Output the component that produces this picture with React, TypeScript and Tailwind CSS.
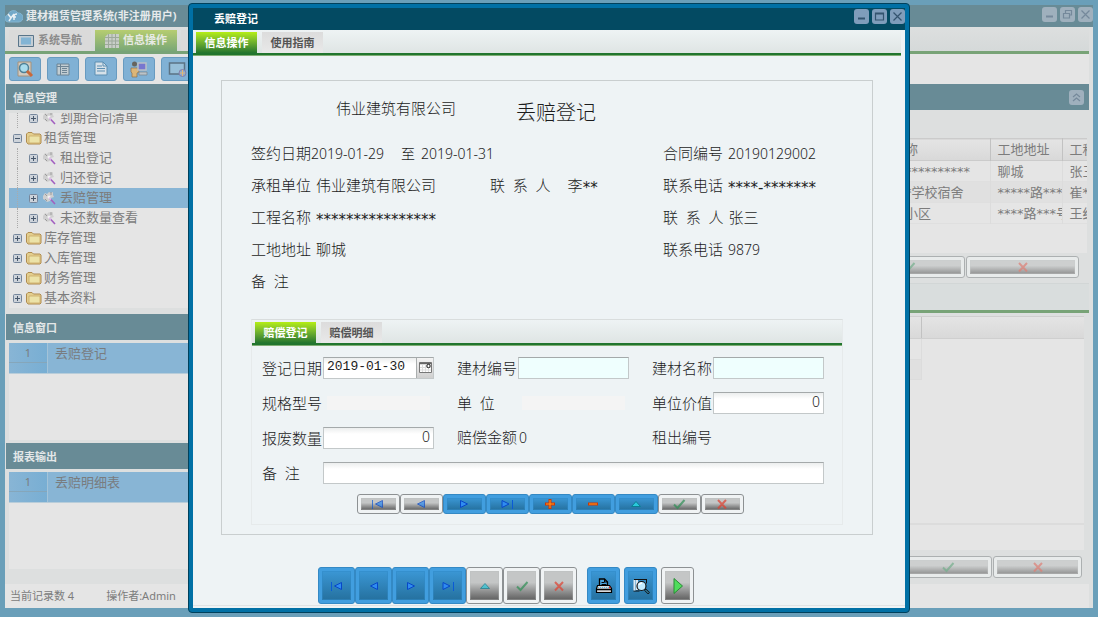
import { useState, type ReactNode } from "react";
import clsx from "clsx";

const UI_FONT = "font-['Noto_Sans','Noto_Sans_CJK_SC',sans-serif]";

const treeItems = [
    { label: "到期合同清单", level: 1 },
    { label: "租赁管理", level: 0, open: true },
    { label: "租出登记", level: 1 },
    { label: "归还登记", level: 1 },
    { label: "丢赔管理", level: 1, active: true },
    { label: "未还数量查看", level: 1 },
    { label: "库存管理", level: 0 },
    { label: "入库管理", level: 0 },
    { label: "财务管理", level: 0 },
    { label: "基本资料", level: 0 }
];

const projects = [
    { name: "****************", address: "聊城", contact: "张三" },
    { name: "*******学校宿舍", address: "*****路****", contact: "崔**" },
    { name: "******小区", address: "****路***号", contact: "王经理" }
];

type GlyphName = "first" | "prev" | "next" | "last" | "plus" | "minus" | "up" | "check" | "cross" | "play";

function Glyph({ name }: { name: GlyphName }) {
    const blue = { fill: "#2f8cf0", stroke: "#0747c8", strokeWidth: 1 };
    return (
        <svg viewBox="0 0 16 12" className="w-4 h-3 overflow-visible" aria-hidden="true">
            {name === "first" && (
                <>
                    <path d="M12.5 2.5v7L5.5 6z" {...blue} />
                    <path d="M2.5 2v9" stroke="#0a5ad6" />
                </>
            )}
            {name === "prev" && <path d="M11.5 2.5v7L4.5 6z" {...blue} />}
            {name === "next" && <path d="M4.5 2.5v7L11.500 6z" {...blue} />}
            {name === "last" && (
                <>
                    <path d="M3 2.5v7L10 6z" {...blue} />
                    <path d="M13.5 2v9" stroke="#0a5ad6" />
                </>
            )}
            {name === "plus" && (
                <>
                    <path d="M8 1v10M3 6h10" stroke="#d23600" strokeWidth="3" />
                    <path d="M8 2v8M4 6h8" stroke="#ff9a20" strokeWidth="1" />
                </>
            )}
            {name === "minus" && (
                <>
                    <path d="M3 6h10" stroke="#d23600" strokeWidth="3" />
                    <path d="M4 6h8" stroke="#ff9a20" strokeWidth="1" />
                </>
            )}
            {name === "up" && <path d="M8 3.5L3.5 8.5h9z" fill="#29c9dc" stroke="#0b7f93" strokeWidth="1" />}
            {name === "check" && <path d="M3 6.5L6.5 10 13.5 2" fill="none" stroke="#2f8f55" strokeWidth="2" />}
            {name === "cross" && <path d="M4 2l8 8.5M12 2L4 10.5" fill="none" stroke="#e0402f" strokeWidth="2" />}
            {name === "play" && <path d="M4-1.5v15L12.500 6z" fill="#4fdc5c" stroke="#2a8a36" />}
        </svg>
    );
}

// Blue when active, silver when the record action is unavailable
function ToolButton({
    label,
    off,
    className,
    faded,
    children
}: {
    label: string;
    off?: boolean;
    className: string;
    faded?: boolean;
    children: ReactNode;
}) {
    return (
        <button
            type="button"
            aria-label={label}
            title={label}
            className={clsx(
                "rounded-[3px] border p-[3px] flex",
                off ? "border-[#8d9193] bg-[#f0f3f4]" : "border-[#3489c4] bg-[#419edf]",
                className
            )}
        >
            <span
                className={clsx(
                    "flex-1 self-stretch flex items-center justify-center overflow-hidden",
                    off
                        ? "bg-linear-to-b from-[#c4c6c6] from-40% to-[#606060] shadow-[inset_0_0_0_1px_#b9bcbc55]"
                        : "bg-linear-to-b from-[#3b97d5] to-[#25719f] shadow-[inset_0_0_0_1px_#3089c880]"
                )}
            >
                <span className={faded ? "opacity-70" : ""}>{children}</span>
            </span>
        </button>
    );
}

function WindowButton({ label, children, className }: { label: string; children: ReactNode; className: string }) {
    return (
        <button
            type="button"
            aria-label={label}
            className={clsx("size-[15px] rounded-[3px] flex items-center justify-center", className)}
        >
            <svg viewBox="0 0 15 15" className="size-[15px]" fill="none" stroke="currentColor" strokeWidth="1.2">
                {children}
            </svg>
        </button>
    );
}

function TabStrip({ tabs, className }: { tabs: string[]; className?: string }) {
    const [current, setCurrent] = useState(tabs[0]);
    return (
        <div
            role="tablist"
            className={clsx(
                "h-[25px] mb-px flex items-end gap-[5px] pl-[3px] border-b-2 border-[#21752e] shadow-[0_1px_0_#7fae74] bg-linear-to-b from-[#eef3f4] to-[#dfe5e4]",
                className
            )}
        >
            {tabs.map((tab) => (
                <button
                    key={tab}
                    type="button"
                    role="tab"
                    aria-selected={tab === current}
                    onClick={() => setCurrent(tab)}
                    className={clsx(
                        "w-[61px] h-[21px] text-[11px] font-bold leading-[21px]",
                        tab === current
                            ? "bg-linear-to-b from-[#b5ee12] to-[#21752e] text-white"
                            : "bg-linear-to-b from-[#dcdcdc] to-[#e9e9e9] text-[#555]"
                    )}
                >
                    {tab}
                </button>
            ))}
        </div>
    );
}

function Stars({ children }: { children: string }) {
    return <span className="font-['DejaVu_Sans','Noto_Sans_CJK_SC',sans-serif]">{children}</span>;
}

function Expander({ open }: { open?: boolean }) {
    return (
        <svg viewBox="0 0 9 9" className="size-[9px] shrink-0" aria-hidden="true">
            <rect x=".5" y=".5" width="8" height="8" rx="1" fill="#cdd3da" stroke="#76879c" />
            <path d={open ? "M2 4.5h5" : "M2 4.5h5M4.5 2v5"} stroke="#47576b" />
        </svg>
    );
}

function Folder() {
    return (
        <svg viewBox="0 0 16 14" className="w-4 h-3.5 shrink-0" aria-hidden="true">
            <path d="M.5 11V3L2 1.500h4L7.500 3H14l1 1v8l-1 1H2z" fill="#e3cf8f" stroke="#b08c50" />
            <path d="M3 5h11v7H3z" fill="#ece3a8" stroke="#cba968" strokeWidth=".8" />
        </svg>
    );
}

function Wand() {
    return (
        <svg viewBox="0 0 14 14" className="size-3.5 shrink-0" aria-hidden="true">
            <path d="M1 5l2-3 2 1 2-2 2 1 2-1v3l1 2-3 1-1 3-3 1-2-2-2-1z" fill="#cfcfcf" />
            <path d="M3 3l2 2M9 1v3M3 8l2 2" stroke="#9b9b9b" />
            <circle cx="7" cy="6" r="1.500" fill="#f2f2f2" />
            <path d="M7.500 7l5.500 6" stroke="#a25fc0" strokeWidth="1.600" />
            <path d="M7 6.500l2 2" stroke="#e7cdf0" strokeWidth="1.200" />
        </svg>
    );
}

function SectionTitle({ children }: { children: ReactNode }) {
    return (
        <h2 className="h-[26px] bg-[#688b96] pl-[7px] text-[11px] leading-[27px] font-bold text-[#e3e7e8]">
            {children}
        </h2>
    );
}

function SideList({ item }: { item: string }) {
    return (
        <div className="mt-[3px] ml-[3px] h-[97px] bg-[#e5e5e5]">
            <div className="flex h-[31px] border-b border-[#b8cdda] bg-[#88b5d5] text-[13px] leading-5 text-[#797c7f]">
                <div className="w-[39px] border-r border-[#a3c3d8] bg-linear-to-r from-[#88b5d5] to-[#78aed3]">
                    <div className="h-5 border-b border-[#85a6ba] text-center text-[11px]">1</div>
                </div>
                <div className="pl-[7px]">{item}</div>
            </div>
        </div>
    );
}

function Sidebar() {
    return (
        <aside className="w-[200px] shrink-0 flex flex-col pl-[1px]">
            <SectionTitle>信息管理</SectionTitle>
            <div className="mt-[3px] ml-[3px] h-[195px] overflow-hidden bg-[#e5e5e5]">
                <ul className="-mt-[5px] text-[13px] text-[#7c7c7c]">
                    {treeItems.map((item) => (
                        <li
                            key={item.label}
                            className={clsx("flex h-5 items-center", item.active && "bg-[#88b5d5]")}
                        >
                            {item.level === 0 ? (
                                <>
                                    <span className="w-1" />
                                    <Expander open={item.open} />
                                    <span className="w-1" />
                                    <Folder />
                                    <span className="pl-[2px]">{item.label}</span>
                                </>
                            ) : (
                                <>
                                    <span className="ml-2 w-3 self-stretch border-l border-dotted border-[#aaa]" />
                                    <Expander />
                                    <span className="w-1" />
                                    <Wand />
                                    <span className="pl-[4px]">{item.label}</span>
                                </>
                            )}
                        </li>
                    ))}
                </ul>
            </div>
            <div className="mt-[6px]">
                <SectionTitle>信息窗口</SectionTitle>
                <SideList item="丢赔登记" />
            </div>
            <div className="mt-[3px]">
                <SectionTitle>报表输出</SectionTitle>
                <SideList item="丢赔明细表" />
            </div>
        </aside>
    );
}

function DimButtons({ className, width }: { className: string; width: string }) {
    return (
        <div className={clsx("flex justify-end gap-px opacity-60", className)}>
            <ToolButton label="保存" off className={clsx("h-[22px]", width)} faded>
                <Glyph name="check" />
            </ToolButton>
            <ToolButton label="取消" off className={clsx("h-[22px]", width)} faded>
                <Glyph name="cross" />
            </ToolButton>
        </div>
    );
}

function MainPanel() {
    return (
        <main className="flex-1 min-w-0 flex flex-col">
            <div className="h-[26px] shrink-0 flex items-center justify-end bg-[#688b96] pr-[5px]">
                <WindowButton label="折叠" className="bg-[#9fb0bd] text-[#75899b]">
                    <path d="M4 7l3.500-3L11 7M4 11l3.500-3 3.500 3" />
                </WindowButton>
            </div>
            <div className="mt-7 mr-[2px] h-[115px] overflow-hidden bg-[#e5e5e5]">
                <table className="w-full table-fixed text-left text-[13px] text-[#7c7c7c]">
                    <colgroup>
                        <col className="w-[653px]" />
                        <col className="w-[132px]" />
                        <col className="w-[72px]" />
                        <col />
                    </colgroup>
                    <thead>
                        <tr className="h-[22px] border-y border-[#cbcbcb] bg-linear-to-b from-[#e4e4e4] to-[#d9d9d9]">
                            <th />
                            <th className="font-normal pl-2 border-r border-[#c2c2c2]">工程名称</th>
                            <th className="font-normal pl-[7px] border-r border-[#c2c2c2]">工地地址</th>
                            <th className="font-normal pl-[7px] whitespace-nowrap overflow-hidden">工程联系</th>
                        </tr>
                    </thead>
                    <tbody>
                        {projects.map((p) => (
                            <tr
                                key={p.name}
                                className="h-[21px] leading-4 whitespace-nowrap border-b border-[#dfdfdf] even:bg-[#e0e0e0]"
                            >
                                <td />
                                <td className="pl-2 overflow-hidden border-r border-[#dcdcdc]">
                                    <Stars>{p.name}</Stars>
                                </td>
                                <td className="pl-[7px] overflow-hidden border-r border-[#dcdcdc]">
                                    <Stars>{p.address}</Stars>
                                </td>
                                <td className="pl-[7px] overflow-hidden">
                                    <Stars>{p.contact}</Stars>
                                </td>
                            </tr>
                        ))}
                    </tbody>
                </table>
            </div>
            <DimButtons className="mt-[3px] pr-[10px]" width="w-[113px]" />
            <div className="mt-[5px] h-[30px] shrink-0 border-t border-[#d2d6d6] border-b-[3px] border-b-[#78a377] bg-[#d9dddd]" />
            <div className="mt-[3px] mr-[5px] flex-1 flex flex-col bg-[#e5e5e5]">
                <div className="flex h-[23px] border-y border-[#cfcfcf] bg-linear-to-b from-[#e4e4e4] to-[#d9d9d9]">
                    <div className="w-[717px] border-r border-[#c2c2c2]" />
                </div>
                <div className="h-5 w-[717px] border-r border-[#dcdcdc]" />
                <div className="h-[21px] w-[717px] border border-[#dcdcdc] bg-[#e0e0e0]" />
                <div className="flex-1" />
                <div className="h-[27px] border-t-2 border-[#dcdcdc]" />
            </div>
            <DimButtons className="mt-[6px] mb-[6px] pr-[7px]" width="w-[89px]" />
        </main>
    );
}

function ShellTool({ label, children }: { label: string; children: ReactNode }) {
    return (
        <button
            type="button"
            aria-label={label}
            className="h-6 w-8 rounded-[3px] border border-[#689bc0] bg-[#80b1d5] flex items-center justify-center"
        >
            <svg viewBox="0 0 20 18" className="w-5 h-[18px]" aria-hidden="true">
                {children}
            </svg>
        </button>
    );
}

function Shell() {
    return (
        <div className="h-full flex flex-col border-x-[5px] border-t-[5px] border-b-[9px] border-[#6a9fb9] bg-[#dddfdf]">
            <header className="h-[22px] shrink-0 flex items-center gap-[3px] bg-[#688b96] text-[11px] font-bold text-[#e6eaec]">
                <svg viewBox="0 0 18 16" className="w-[18px] h-4" aria-hidden="true">
                    <path
                        d="M4 14a3.500 3.500 0 0 1-1-7 5.500 5.500 0 0 1 10-2 4.500 4.500 0 0 1 1 9z"
                        fill="#72a9c9"
                        stroke="#82b4cf"
                    />
                    <path d="M3 6l3 4 3-4M6 10l-2 3M9 12V8q0-2 3-2M8 9h3" fill="none" stroke="#e8f0f4" strokeWidth="1.500" />
                </svg>
                <h1 className="flex-1">建材租赁管理系统(非注册用户)</h1>
                <div className="flex gap-[3px] pb-1">
                    <WindowButton label="最小化" className="bg-[#9fb0bd] text-[#75899b]">
                        <path d="M4 9.500h7" strokeWidth="2" />
                    </WindowButton>
                    <WindowButton label="还原" className="bg-[#9fb0bd] text-[#75899b]">
                        <path d="M5.500 6V3.500h6V8H9M3.500 6.500h6v4.500h-6z" />
                    </WindowButton>
                    <WindowButton label="关闭" className="bg-[#9fb0bd] text-[#75899b]">
                        <path d="M3.500 3.500l8 8M11.500 3.500l-8 8" />
                    </WindowButton>
                </div>
            </header>
            <nav className="mr-1 h-[27px] shrink-0 flex items-end gap-1 border-b-[3px] border-[#78a377] bg-linear-to-b from-[#dddfdf] to-[#d5d9d9] pl-1 text-[11px] font-bold">
                <button type="button" className="h-[21px] w-[82px] flex items-center justify-center gap-1 bg-[#dadada] text-[#8b8b8b]">
                    <svg viewBox="0 0 16 12" className="w-4 h-3">
                        <path d="M.5.500h15v11H.500z" fill="#c5ced5" stroke="#59758a" />
                        <path d="M3 2.500h10v7H3z" fill="#83b4d4" />
                    </svg>
                    系统导航
                </button>
                <button
                    type="button"
                    className="h-[21px] w-[82px] flex items-center justify-center gap-1 bg-linear-to-b from-[#b6cd70] to-[#79a776] text-[#e7eae4]"
                >
                    <svg viewBox="0 0 14 14" className="size-3.5" fill="none">
                        <path d="M3 0h11v14H0V3z" fill="#c9cec8" />
                        <path d="M3.500 0v14M7 0v14M10.500 0v14M0 3.500h14M0 7h14M0 10.500h14" stroke="#9da99b" />
                    </svg>
                    信息操作
                </button>
                <span className="h-[21px] w-20 bg-[#dadada]" />
            </nav>
            <div className="mr-1 h-[30px] shrink-0 flex items-center gap-[6px] bg-[#e5e5e5] pl-1">
                <ShellTool label="查询">
                    <path d="M3 2h13v14H3z" fill="#d1cbc2" stroke="#a6927b" />
                    <circle cx="9" cy="8" r="4.500" fill="#a9dced" stroke="#4f8197" strokeWidth="1.500" />
                    <path d="M12 11l5 5" stroke="#c9683a" strokeWidth="3" />
                </ShellTool>
                <ShellTool label="表格">
                    <path d="M4 4h12v11H4z" fill="#c2cdd2" stroke="#6d8494" />
                    <path d="M4 6.500h12M7.500 4v11M9 8.500h5M9 10.500h5M9 12.500h5" stroke="#6d8494" />
                </ShellTool>
                <ShellTool label="文档">
                    <path d="M4 2h8l4 4v9H4z" fill="#d6e1e9" stroke="#5c8fb2" />
                    <path d="M6 6h5M6 8.500h8M6 11h8M12 2v4h4" stroke="#5c8fb2" fill="none" />
                </ShellTool>
                <ShellTool label="用户">
                    <circle cx="5.500" cy="4" r="2.500" fill="#66645f" />
                    <path d="M2 8h7l1 4-2 1v4H3v-4l-1-1z" fill="#dcb678" stroke="#8b714f" strokeWidth=".7" />
                    <path d="M9 3h8v7H9z" fill="#7777cf" stroke="#b9c0c6" strokeWidth="1.500" />
                    <path d="M10 12h8v3h-8z" fill="#bbc3c9" stroke="#78838a" strokeWidth=".7" />
                </ShellTool>
                <ShellTool label="显示">
                    <path d="M2.500 3h15v11h-15z" fill="#97bfd8" stroke="#5b7384" strokeWidth="1.500" />
                    <circle cx="15.500" cy="13" r="3.500" fill="#8aa8cf" stroke="#857fa8" />
                    <path d="M13 13h5M15.500 10v6" stroke="#dfb777" />
                </ShellTool>
            </div>
            <div className="flex-1 min-h-0 flex pr-1">
                <Sidebar />
                <MainPanel />
            </div>
            <footer className="mr-1 h-6 shrink-0 flex items-center gap-8 bg-[#e5e5e5] pl-[5px] text-[11px] text-[#7c7c7c]">
                <span>当前记录数 4</span>
                <span>操作者:Admin</span>
            </footer>
        </div>
    );
}

function Info({ label, children, gap = "gap-[5px]" }: { label: string; children?: ReactNode; gap?: string }) {
    return (
        <div className={clsx("flex items-center", gap)}>
            <span>{label}</span>
            <span className="text-[14px]">{children}</span>
        </div>
    );
}

// Asterisks sit high in the line, so masked values get padding to centre them
function Masked({ children }: { children: string }) {
    return (
        <span className="block pt-[6px] text-[15px] font-normal">
            <Stars>{children}</Stars>
        </span>
    );
}

function Field({
    id,
    label,
    value = "",
    kind = "plain",
    wide
}: {
    id: string;
    label: string;
    value?: string;
    kind?: "plain" | "required" | "readonly" | "date" | "number";
    wide?: boolean;
}) {
    return (
        <div className={clsx("flex items-center h-[35px]", wide && "col-span-3")}>
            <label htmlFor={id} className="w-[61px] shrink-0 pt-[2px] whitespace-nowrap">
                {label}
            </label>
            <div
                className={clsx(
                    "flex",
                    wide ? "w-[501px]" : "w-[111px]",
                    kind === "readonly"
                        ? "h-[14px] px-1"
                        : "h-[22px] border border-[#c3c8c9] border-t-[#a4a9aa]",
                    kind === "required" && "bg-[#effffe]",
                    (kind === "plain" || kind === "number" || kind === "date") &&
                        "bg-linear-to-b from-[#eceeee] to-white to-30%"
                )}
            >
                <input
                    id={id}
                    defaultValue={value}
                    readOnly={kind === "readonly"}
                    className={clsx(
                        "min-w-0 flex-1 outline-none",
                        kind === "number" && "pr-[3px] pb-[3px] text-right text-[14px]",
                        kind === "date" && "pl-[3px] pb-[2px] font-['Liberation_Mono',monospace] text-[13px]",
                        kind === "readonly" && "bg-[#f4f4f4]"
                    )}
                />
                {kind === "date" && (
                    <button
                        type="button"
                        aria-label="选择日期"
                        className="w-[17px] flex items-center justify-center border-l border-[#aaaeae] bg-linear-to-b from-[#f4f4f4] to-[#cfcfcf]"
                    >
                        <svg viewBox="0 0 13 13" className="size-[13px]">
                            <path d="M.5 1.500h12v10H.500z" fill="#fff" stroke="#777" />
                            <path d="M.5 2.500h12" stroke="#666" strokeWidth="1.500" />
                            <path d="M3.500 4v7M6.500 4v7M9.500 6v5M1 6.500h11M1 9h11" stroke="#ddd" />
                            <circle cx="9.500" cy="5" r="1.700" fill="#fff" stroke="#111" />
                        </svg>
                    </button>
                )}
            </div>
        </div>
    );
}

const rowActions: { label: string; glyph: GlyphName; off?: boolean }[] = [
    { label: "首条", glyph: "first", off: true },
    { label: "上一条", glyph: "prev", off: true },
    { label: "下一条", glyph: "next" },
    { label: "末条", glyph: "last" },
    { label: "新增", glyph: "plus" },
    { label: "删除", glyph: "minus" },
    { label: "编辑", glyph: "up" },
    { label: "保存", glyph: "check", off: true },
    { label: "取消", glyph: "cross", off: true }
];

const formActions: { label: string; glyph: GlyphName; off?: boolean }[] = [
    { label: "首条", glyph: "first" },
    { label: "上一条", glyph: "prev" },
    { label: "下一条", glyph: "next" },
    { label: "末条", glyph: "last" },
    { label: "编辑", glyph: "up", off: true },
    { label: "保存", glyph: "check", off: true },
    { label: "取消", glyph: "cross", off: true }
];

function CompensationForm() {
    return (
        <section className="border border-[#e6eaeb] border-t-[#d9dddd]">
            <TabStrip tabs={["赔偿登记", "赔偿明细"]} />
            <div className="grid grid-cols-[195px_195px_1fr] pl-[10px] pt-1">
                <Field id="reg-date" label="登记日期" value="2019-01-30" kind="date" />
                <Field id="mat-code" label="建材编号" kind="required" />
                <Field id="mat-name" label="建材名称" kind="required" />
                <Field id="spec" label="规格型号" kind="readonly" />
                <Field id="unit" label="单 &nbsp;位" kind="readonly" />
                <Field id="unit-price" label="单位价值" value="0" kind="number" />
                <Field id="scrap" label="报废数量" value="0" kind="number" />
                <Info label="赔偿金额" gap="gap-[2px]">
                    0
                </Info>
                <Info label="租出编号" />
                <Field id="remark" label="备 &nbsp;注" wide />
            </div>
            <div className="mt-1 mb-[10px] flex justify-center pl-[6px]">
                {rowActions.map((a) => (
                    <ToolButton key={a.label} label={a.label} off={a.off} faded={a.off} className="w-[43px] h-5">
                        <Glyph name={a.glyph} />
                    </ToolButton>
                ))}
            </div>
        </section>
    );
}

function LossDialog() {
    return (
        <div
            role="dialog"
            aria-label="丢赔登记"
            className="w-[722px] max-w-full h-full flex flex-col rounded-[4px] border border-[#00415c] bg-[#0070a5] p-1 text-[15px] text-[#1c1c1c] font-light"
        >
            <header className="h-[22px] shrink-0 flex items-center bg-[#034a62] pl-[21px]">
                <h2 className="flex-1 text-[11px] font-bold text-white">丢赔登记</h2>
                <div className="flex gap-[3px] pb-[5px]">
                    <WindowButton label="最小化" className="bg-[#7f9dbb] text-[#34546f]">
                        <path d="M4 9.500h7" strokeWidth="2" />
                    </WindowButton>
                    <WindowButton label="最大化" className="bg-[#7f9dbb] text-[#34546f]">
                        <path d="M3.500 4h8v7h-8zM3.500 5h8" />
                    </WindowButton>
                    <WindowButton label="关闭" className="bg-[#7f9dbb] text-[#34546f]">
                        <path d="M3.500 3.500l8 8M11.500 3.500l-8 8" />
                    </WindowButton>
                </div>
            </header>
            <div className="flex-1 flex flex-col bg-[#eef3f5]">
                <TabStrip tabs={["信息操作", "使用指南"]} className="mr-1" />
                <div className="mx-7 mr-8 mt-6 border border-[#c9cecf] pl-[29px] pr-[29px] pb-[9px]">
                    <div className="h-14 flex items-center pl-[85px] pt-1 gap-[60px]">
                        <span className="pb-[6px]">伟业建筑有限公司</span>
                        <h3 className="text-[20px] pt-1">丢赔登记</h3>
                    </div>
                    <div className="grid grid-cols-[1fr_180px] auto-rows-[32px]">
                        <div className="flex items-center">
                            <Info label="签约日期" gap="gap-0">
                                2019-01-29
                            </Info>
                            <span className="pl-[17px] pr-[6px] text-[14px]">至</span>
                            <span className="text-[14px]">2019-01-31</span>
                        </div>
                        <Info label="合同编号">20190129002</Info>
                        <div className="flex items-center">
                            <div className="w-[239px]">
                                <Info label="承租单位">
                                    <span className="text-[15px]">伟业建筑有限公司</span>
                                </Info>
                            </div>
                            <Info label="联 &nbsp;系 &nbsp;人" gap="gap-[17px]">
                                <span className="flex items-center text-[15px]">
                                    李<Masked>**</Masked>
                                </span>
                            </Info>
                        </div>
                        <Info label="联系电话">
                            <Masked>****-*******</Masked>
                        </Info>
                        <Info label="工程名称">
                            <Masked>****************</Masked>
                        </Info>
                        <Info label="联 &nbsp;系 &nbsp;人">
                            <span className="text-[15px]">张三</span>
                        </Info>
                        <Info label="工地地址">
                            <span className="text-[15px]">聊城</span>
                        </Info>
                        <Info label="联系电话">9879</Info>
                        <Info label="备 &nbsp;注" />
                    </div>
                    <div className="mt-[22px]">
                        <CompensationForm />
                    </div>
                </div>
                <div className="mt-auto mb-[2px] flex border-b border-[#dfe3e4] pl-[125px] pb-[1px] pt-4">
                    {formActions.map((a) => (
                        <ToolButton key={a.label} label={a.label} off={a.off} faded={a.off} className="w-[37px] h-[37px]">
                            <Glyph name={a.glyph} />
                        </ToolButton>
                    ))}
                    <div className="flex gap-1 pl-[10px]">
                        <ToolButton label="打印" className="w-[33px] h-[37px]">
                            <svg viewBox="0 0 18 16" className="w-[18px] h-4" aria-hidden="true">
                                <path d="M4.500 8V1h5l3 3v4" fill="#4aa3dc" stroke="#000" strokeWidth="1.300" />
                                <path d="M6.500 4.500h3M6.500 6.500h5M9.500 1v3h3" fill="none" stroke="#000" />
                                <path d="M2.500 7.500h12l2 3v4h-15v-4z" fill="#d5d8da" stroke="#000" strokeWidth="1.200" />
                                <path d="M1.500 11.500h15" stroke="#000" strokeWidth="1.500" />
                                <path d="M3 9.500h11" stroke="#55b9e8" strokeDasharray="1 1" />
                                <path d="M14 9.500h1.500" stroke="#e02020" strokeWidth="1.500" />
                            </svg>
                        </ToolButton>
                        <ToolButton label="预览" className="w-[33px] h-[37px]">
                            <svg viewBox="0 0 18 16" className="w-[18px] h-4" aria-hidden="true">
                                <path d="M2 1.500h13M1.500 13h6" stroke="#111" strokeWidth="1.200" />
                                <path d="M2.500 2v10.500M5 2v10" stroke="#dceaf3" strokeWidth="2" />
                                <path d="M14.500 1.500v4" stroke="#111" />
                                <circle cx="9.500" cy="8" r="4.500" fill="#c4ecff" stroke="#111" strokeWidth="1.200" />
                                <path d="M7 7q1-2 3-2" fill="none" stroke="#fff" strokeWidth="1.500" />
                                <path d="M13 11.500l4 4" stroke="#111" strokeWidth="2.500" />
                                <path d="M13.500 12l3 3" stroke="#43c1f3" />
                            </svg>
                        </ToolButton>
                        <ToolButton label="执行" off className="w-[33px] h-[37px]">
                            <Glyph name="play" />
                        </ToolButton>
                    </div>
                </div>
            </div>
        </div>
    );
}

export default function App() {
    return (
        <div className={clsx("relative h-screen min-h-[617px] overflow-hidden", UI_FONT)}>
            <Shell />
            <div className="absolute inset-0 flex justify-center pt-[3px] pb-1">
                <LossDialog />
            </div>
        </div>
    );
}
